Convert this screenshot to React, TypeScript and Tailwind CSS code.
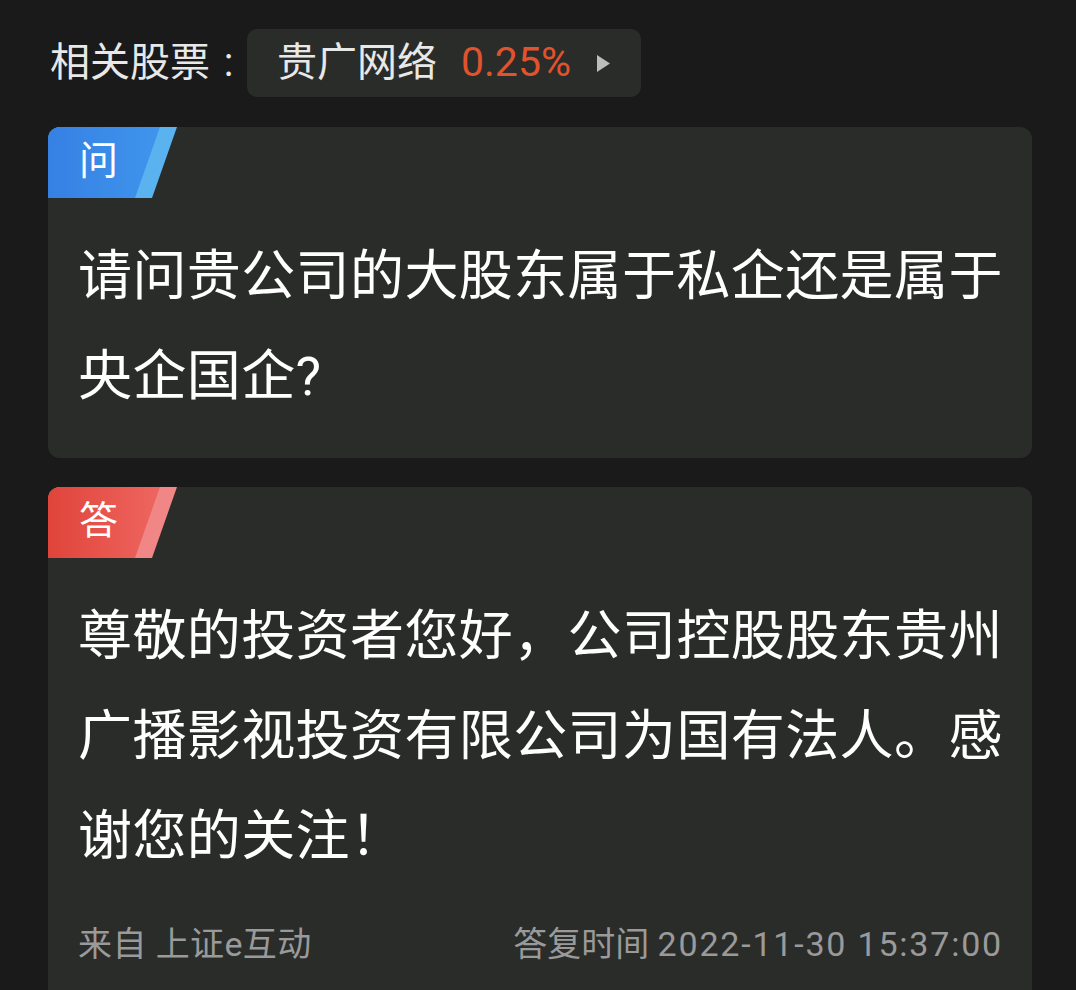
import React from 'react';

const Badge = ({ label, from, to, strip }: { label: string; from: string; to: string; strip: string }) => {
  const id = `g-${label}`;
  return (
    <div className="relative h-[71px] w-[130px]">
      <svg width="130" height="71" viewBox="0 0 130 71" className="absolute inset-0">
        <defs>
          <linearGradient id={id} x1="0" y1="0" x2="1" y2="0">
            <stop offset="0" stopColor={from} />
            <stop offset="1" stopColor={to} />
          </linearGradient>
        </defs>
        <polygon points="0,0 129,0 104,71 0,71" fill={strip} />
        <polygon points="0,0 112,0 87,71 0,71" fill={`url(#${id})`} />
      </svg>
      <span className="absolute left-[31px] top-[10px] text-[39px] leading-[48px] text-white">{label}</span>
    </div>
  );
};

const App = () => {
  return (
    <div className="w-[1076px] h-[990px] overflow-hidden bg-[#1a1a1a] pl-12 pr-[44px] pt-[29px] font-['Roboto','Noto_Sans_CJK_SC',sans-serif]">
      <div className="flex items-center h-[68px]">
        <span className="text-[40px] text-[#e8e8e8] pl-[2px]">相关股票</span>
        <span className="text-[40px] text-[#e8e8e8] w-[37px] text-center">:</span>
        <div className="flex items-center h-[68px] w-[394px] rounded-[10px] bg-[#2a2c2a] pl-[30px]">
          <span className="text-[40px] text-[#e8e8e8]">贵广网络</span>
          <span className="ml-[24px] text-[41px] text-[#e0532d]">0.25%</span>
          <svg width="15" height="17" viewBox="0 0 15 17" className="ml-[25px]">
            <polygon points="1,0 14,8.5 1,17" fill="#bdbdbd" />
          </svg>
        </div>
      </div>

      <div className="mt-[30px] rounded-xl bg-[#2a2c2a] overflow-hidden">
        <Badge label="问" from="#3680e4" to="#3f95ec" strip="#5ab3ef" />
        <div className="pl-[30px] pr-[24px] pt-[29px] pb-[31px] text-[54px] leading-[100px] tracking-[0.4px] text-white">
          请问贵公司的大股东属于私企还是属于央企国企?
        </div>
      </div>

      <div className="mt-[29px] rounded-xl bg-[#2a2c2a] overflow-hidden">
        <Badge label="答" from="#e0443a" to="#ee6660" strip="#f08686" />
        <div className="pl-[30px] pr-[24px] pt-[29px] text-[54px] leading-[100px] tracking-[0.4px] text-white">
          尊敬的投资者您好，公司控股股东贵州广播影视投资有限公司为国有法人。感谢您的关注！
        </div>
        <div className="flex justify-between items-center pl-[30px] pr-[29px] mt-[33px] pb-[40px] text-[34px] leading-[48px] text-[#9a9a9a] whitespace-nowrap">
          <span className="tracking-[0.4px]">来自 上证e互动</span>
          <span>
            答复时间 <span className="tracking-[1.8px]">2022-11-30 15:37:00</span>
          </span>
        </div>
      </div>
    </div>
  );
};

export default App;
